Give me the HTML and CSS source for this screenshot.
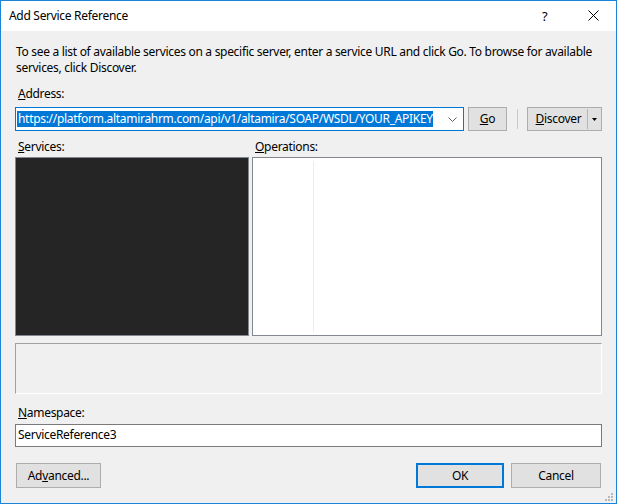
FILE: index.html
```html
<!DOCTYPE html>
<html>
<head>
<meta charset="utf-8">
<link rel="stylesheet" href="styles.css">
</head>
<body>
<div class="window">
  <div class="titlebar">
    <span class="title">Add Service Reference</span>
    <span class="help">?</span>
    <span class="close"><svg width="11" height="11" viewBox="0 0 11 11"><path d="M0.5 0.5L10.5 10.5M10.5 0.5L0.5 10.5" stroke="#000" stroke-width="1" fill="none"/></svg></span>
  </div>
  <div class="content">
    <p class="intro">To see a list of available services on a specific server, enter a service URL and click Go. To browse for available<br>services, click Discover.</p>
    <div class="label addr-label"><u>A</u>ddress:</div>
    <div class="addr-row">
      <div class="combo">
        <span class="sel">https://platform.altamirahrm.com/api/v1/altamira/SOAP/WSDL/YOUR_APIKEY</span>
        <svg class="chev" width="9" height="5" viewBox="0 0 9 5"><path d="M0.5 0.5L4.5 4.5L8.5 0.5" stroke="#606060" stroke-width="1" fill="none"/></svg>
      </div>
      <div class="btn go"><u>G</u>o</div>
      <div class="sep"></div>
      <div class="btn split">
        <span class="split-main"><u>D</u>iscover</span>
        <span class="split-arrow"><svg width="5" height="3" viewBox="0 0 5 3"><path d="M0 0H5L2.5 3Z" fill="#000"/></svg></span>
      </div>
    </div>
    <div class="lists">
      <div class="col services-col">
        <div class="label"><u>S</u>ervices:</div>
        <div class="list dark"></div>
      </div>
      <div class="col ops-col">
        <div class="label ops-label"><u>O</u>perations:</div>
        <div class="list light"><div class="ops-line"></div></div>
      </div>
    </div>
    <div class="desc-box"></div>
    <div class="label ns-label"><u>N</u>amespace:</div>
    <div class="textbox">ServiceReference3</div>
    <div class="footer">
      <div class="btn adv">Ad<u>v</u>anced...</div>
      <div class="spacer"></div>
      <div class="btn ok">OK</div>
      <div class="btn cancel">Cancel</div>
    </div>
    <svg class="grip" width="9" height="9" viewBox="0 0 9 9">
      <rect x="6" y="0" width="2" height="2" fill="#b8b8b8"/>
      <rect x="3" y="3" width="2" height="2" fill="#b8b8b8"/>
      <rect x="6" y="3" width="2" height="2" fill="#b8b8b8"/>
      <rect x="0" y="6" width="2" height="2" fill="#b8b8b8"/>
      <rect x="3" y="6" width="2" height="2" fill="#b8b8b8"/>
      <rect x="6" y="6" width="2" height="2" fill="#b8b8b8"/>
    </svg>
  </div>
</div>
</body>
</html>
```

FILE: styles.css
```css
* { box-sizing: border-box; }
html, body { margin: 0; padding: 0; }
body {
  font-family: "Noto Sans", "Open Sans", sans-serif;
  font-size: 12px;
  letter-spacing: -0.3px;
  color: #000;
  background: #fff;
}
.window {
  width: 617px;
  height: 504px;
  border: 1px solid #1b84d8;
  display: flex;
  flex-direction: column;
  overflow: hidden;
}
.titlebar {
  height: 30px;
  background: #fff;
  display: flex;
  align-items: center;
  padding-left: 8px;
  flex: none;
}
.title {
  flex: 1;
  font-size: 12px;
  line-height: 16px;
  margin-top: -1px;
}
.help {
  font-size: 13px;
  line-height: 16px;
  width: 12px;
  margin-right: 34px;
  margin-top: -1px;
}
.close {
  display: flex;
  width: 11px;
  height: 11px;
  margin-right: 17px;
  margin-top: -1px;
}
.content {
  flex: 1;
  background: #f0f0f0;
  padding: 0 14px;
  display: flex;
  flex-direction: column;
  position: relative;
}
.intro {
  margin: 13px 0 0 1px;
  line-height: 16px;
  white-space: nowrap;
}
.label {
  line-height: 16px;
  height: 16px;
  padding-left: 3px;
}
.addr-label { margin-top: 10px; }
.addr-row {
  display: flex;
  margin-top: 5px;
  height: 24px;
  align-items: stretch;
}
.combo {
  width: 449px;
  border: 1px solid #0078d7;
  background: #fff;
  display: flex;
  align-items: center;
  padding-left: 1px;
}
.sel {
  background: #0078d7;
  color: #fff;
  line-height: 16px;
  padding-left: 1px;
  flex: none;
}
.chev {
  margin-left: auto;
  margin-right: 6px;
}
.btn {
  background: #e1e1e1;
  border: 1px solid #adadad;
  display: flex;
  align-items: center;
  justify-content: center;
  line-height: 16px;
}
.go {
  width: 39px;
  margin-left: 4px;
}
.sep {
  width: 1px;
  background: #c9c9c9;
  margin: 2px 9px 2px 10px;
}
.split {
  width: 75px;
  justify-content: flex-start;
  align-items: stretch;
}
.split-main {
  width: 60px;
  display: flex;
  align-items: center;
  justify-content: center;
  border-right: 1px solid #b5b5b5;
  margin: 1px 0;
  padding-left: 2px;
}
.split-arrow {
  flex: 1;
  display: flex;
  align-items: center;
  justify-content: center;
}
.lists {
  display: flex;
  gap: 3px;
  margin-top: 8px;
}
.col {
  display: flex;
  flex-direction: column;
}
.services-col { width: 234px; }
.ops-col { flex: 1; }
.list {
  margin-top: 2px;
  height: 179px;
  border: 1px solid #828790;
}
.dark { background: #252525; }
.light {
  background: #fff;
  padding: 3px 0 3px 60px;
  display: flex;
}
.ops-line {
  width: 1px;
  background: #e7eef6;
}
.desc-box {
  margin-top: 7px;
  height: 51px;
  border: 1px solid;
  border-color: #a0a0a0 #fff #fff #a0a0a0;
}
.ns-label { margin-top: 11px; }
.textbox {
  margin-top: 3px;
  height: 23px;
  border: 1px solid #7a7a7a;
  background: #fff;
  padding-left: 2px;
  line-height: 20px;
}
.footer {
  display: flex;
  margin-top: 16px;
  height: 25px;
}
.adv {
  width: 85px;
  margin-left: 1px;
}
.spacer { flex: 1; }
.ok {
  width: 88px;
  border: 2px solid #0078d7;
  margin-right: 7px;
}
.cancel {
  width: 90px;
  margin-right: 1px;
}
.grip {
  position: absolute;
  right: 2px;
  bottom: 1px;
}
```
